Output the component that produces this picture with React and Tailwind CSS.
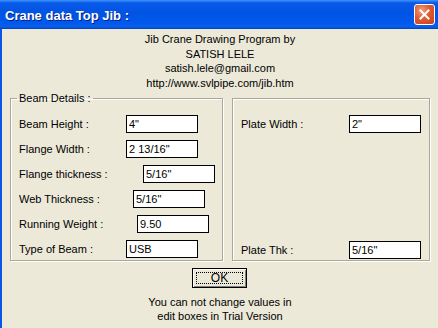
import React from 'react'

const beamRows = [
  { label: 'Beam Height :', value: '4"', labelW: 'w-[107px]' },
  { label: 'Flange Width :', value: '2 13/16"', labelW: 'w-[107px]' },
  { label: 'Flange thickness :', value: '5/16"', labelW: 'w-[124px]' },
  { label: 'Web Thickness :', value: '5/16"', labelW: 'w-[114px]' },
  { label: 'Running Weight :', value: '9.50', labelW: 'w-[118px]' },
  { label: 'Type of Beam :', value: 'USB', labelW: 'w-[107px]' },
]

function Field({ value }) {
  return (
    <input
      readOnly
      value={value}
      className="w-[72px] h-[18px] border border-black bg-white px-[2px] text-[11px] text-black outline-none"
    />
  )
}

export default function App() {
  return (
    <div className="w-[438px] h-[328px] flex flex-col overflow-hidden font-['Liberation_Sans',Arial,sans-serif] text-[11px] text-black">
      {/* title bar */}
      <div className="h-[29px] shrink-0 flex items-center justify-between pl-[5px] pr-[3px] bg-[linear-gradient(180deg,#3d95ff_0%,#0a5ae8_10%,#0054e3_45%,#0058ee_80%,#0a5fe8_92%,#0042c8_100%)]">
        <span className="pt-[3px] text-[13px] font-bold text-white [text-shadow:1px_1px_0_#0a1f7a]">
          Crane data Top Jib :
        </span>
        <button className="w-[21px] h-[21px] rounded-[3px] border border-white flex items-center justify-center bg-[radial-gradient(circle_at_35%_30%,#f0a080_0%,#e05a30_45%,#c8401c_100%)]">
          <svg width="11" height="11" viewBox="0 0 11 11">
            <path d="M1.5 1.5 L9.5 9.5 M9.5 1.5 L1.5 9.5" stroke="white" strokeWidth="2" strokeLinecap="square" />
          </svg>
        </button>
      </div>

      {/* client area */}
      <div className="flex-1 flex flex-col border-l-2 border-[#0a55e5] bg-[#ece9d8]">
        <div className="pt-[3px] flex flex-col items-center leading-[14.5px]">
          <span>Jib Crane Drawing Program by</span>
          <span>SATISH LELE</span>
          <span>satish.lele@gmail.com</span>
          <span>http://www.svlpipe.com/jib.htm</span>
        </div>

        <div className="mt-[8px] pl-[8px] flex gap-[9px]">
          {/* Beam Details */}
          <fieldset className="w-[213px] h-[170px] border border-[#aca899] shadow-[1px_1px_0_#fff,inset_1px_1px_0_#fff] pl-[8px] pb-[1px] mt-[-7px]">
            <legend className="ml-[-2px] px-[2px] leading-[14px]">Beam Details :</legend>
            <div className="pt-[10px] flex flex-col gap-[7px]">
              {beamRows.map((r) => (
                <div key={r.label} className="flex items-center h-[18px]">
                  <span className={r.labelW}>{r.label}</span>
                  <Field value={r.value} />
                </div>
              ))}
            </div>
          </fieldset>

          {/* Plate */}
          <div className="w-[198px] h-[163px] border border-[#aca899] shadow-[1px_1px_0_#fff,inset_1px_1px_0_#fff] pl-[8px] pt-[16px] pb-[1px] flex flex-col justify-between">
            <div className="flex items-center h-[18px]">
              <span className="w-[108px]">Plate Width :</span>
              <Field value={'2"'} />
            </div>
            <div className="flex items-center h-[18px]">
              <span className="w-[108px]">Plate Thk :</span>
              <Field value={'5/16"'} />
            </div>
          </div>
        </div>

        <div className="mt-[7px] flex justify-center pr-[1px]">
          <button className="w-[55px] h-[20px] border border-black bg-[#ece9d8] shadow-[inset_1px_1px_0_#fff,inset_-1px_-1px_0_#808080] p-[3px] flex">
            <span className="flex-1 border border-dotted border-black flex items-center justify-center leading-none text-[12px]">
              OK
            </span>
          </button>
        </div>

        <div className="mt-[7px] flex flex-col items-center leading-[14px]">
          <span>You can not change values in</span>
          <span>edit boxes in Trial Version</span>
        </div>
      </div>
    </div>
  )
}
